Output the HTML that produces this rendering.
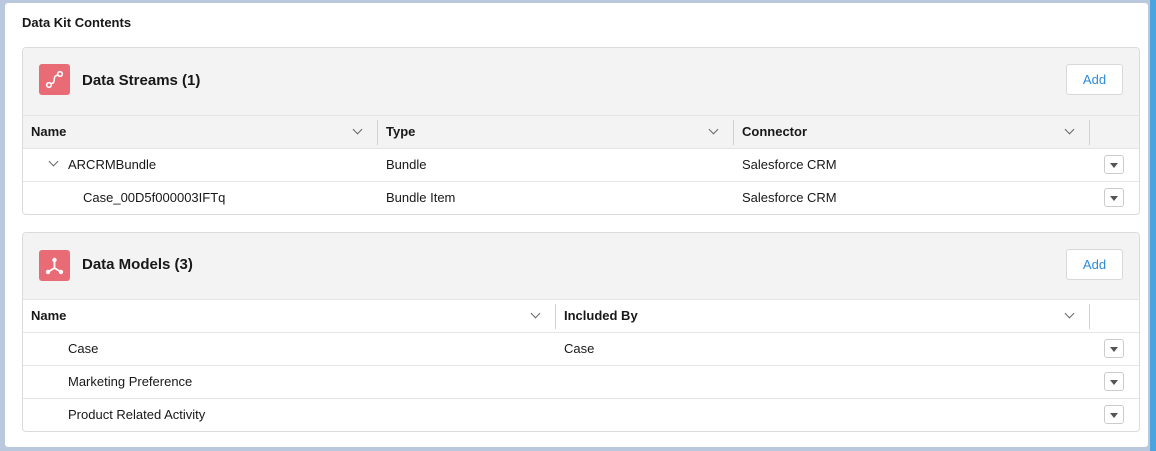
<!DOCTYPE html>
<html><head><style>
*{box-sizing:border-box;margin:0;padding:0}
body{width:1156px;height:451px;background:#b9c8dd;font-family:"Liberation Sans",sans-serif;position:relative;overflow:hidden;color:#181818}
.panel{position:absolute;left:5px;top:3px;width:1143px;height:444px;background:#fff;border-radius:3px}
.strip{position:absolute;left:1150px;top:0;width:6px;height:451px;background:#4ba3e0}
.title{position:absolute;left:22px;top:15px;font-size:13px;font-weight:bold}
.card{position:absolute;left:22px;width:1118px;border:1px solid #dddbda;border-radius:4px;background:#fff;overflow:hidden}
.hd{background:#f3f3f3;position:relative}
.icon{position:absolute;left:16px;width:31px;height:31px;background:#e96b76;border-radius:3px}
.ht{position:absolute;left:59px;font-size:15px;font-weight:bold}
.add{position:absolute;right:16px;width:57px;height:31px;background:#fff;border:1px solid #d8d8d8;border-radius:3px;color:#2e8ad6;font-size:13px;text-align:center;line-height:29px}
.row{position:relative;height:33px;border-top:1px solid #e5e5e5;font-size:13px}
.row span{position:absolute;top:8px}
.th{font-weight:bold}
.sep{position:absolute;top:4px;width:1px;height:25px;background:#d0d0d0}
.chev{position:absolute;top:10px;border-right:1.3px solid #666;border-bottom:1.3px solid #666;transform:rotate(45deg);width:7px;height:7px}
.dd{position:absolute;right:15px;top:6px;width:20px;height:19px;border:1px solid #ccc;border-radius:3px;background:#fff}
.dd:after{content:"";position:absolute;left:5px;top:7px;border-left:4px solid transparent;border-right:4px solid transparent;border-top:5px solid #555}
</style></head><body>
<div class="panel"></div><div class="strip"></div>
<div class="title">Data Kit Contents</div>

<div class="card" style="top:47px;height:168px">
 <div class="hd" style="height:67px">
  <div class="icon" style="top:16px"><svg width="31" height="31" viewBox="0 0 31 31"><circle cx="10" cy="21" r="2.3" fill="none" stroke="#fff" stroke-width="1.6"/><circle cx="21" cy="10" r="2.3" fill="none" stroke="#fff" stroke-width="1.6"/><path d="M12 19.5 L14 19 C16 18 14.5 13 16.5 12 L18.8 11" fill="none" stroke="#fff" stroke-width="1.6"/></svg></div>
  <div class="ht" style="top:24px">Data Streams (1)</div>
  <div class="add" style="top:16px">Add</div>
 </div>
 <div class="row th" style="background:#f3f3f3">
  <span style="left:8px">Name</span><i class="chev" style="left:331px"></i><div class="sep" style="left:354px"></div>
  <span style="left:363px">Type</span><i class="chev" style="left:687px"></i><div class="sep" style="left:710px"></div>
  <span style="left:719px">Connector</span><i class="chev" style="left:1043px"></i><div class="sep" style="left:1066px"></div>
 </div>
 <div class="row"><i class="chev" style="left:27px;top:9px"></i><span style="left:45px">ARCRMBundle</span><span style="left:363px">Bundle</span><span style="left:719px">Salesforce CRM</span><div class="dd"></div></div>
 <div class="row"><span style="left:60px">Case_00D5f000003IFTq</span><span style="left:363px">Bundle Item</span><span style="left:719px">Salesforce CRM</span><div class="dd"></div></div>
</div>

<div class="card" style="top:232px;height:200px">
 <div class="hd" style="height:66px">
  <div class="icon" style="top:17px"><svg width="31" height="31" viewBox="0 0 31 31"><circle cx="15.5" cy="10" r="2.2" fill="#fff"/><circle cx="9" cy="22" r="2.2" fill="#fff"/><circle cx="22" cy="22" r="2.2" fill="#fff"/><path d="M15.5 10 L15.5 18 L9 22 M15.5 18 L22 22" fill="none" stroke="#fff" stroke-width="1.8"/></svg></div>
  <div class="ht" style="top:23px">Data Models (3)</div>
  <div class="add" style="top:16px">Add</div>
 </div>
 <div class="row th">
  <span style="left:8px">Name</span><i class="chev" style="left:509px"></i><div class="sep" style="left:532px"></div>
  <span style="left:541px">Included By</span><i class="chev" style="left:1043px"></i><div class="sep" style="left:1066px"></div>
 </div>
 <div class="row"><span style="left:45px">Case</span><span style="left:541px">Case</span><div class="dd"></div></div>
 <div class="row"><span style="left:45px">Marketing Preference</span><div class="dd"></div></div>
 <div class="row"><span style="left:45px">Product Related Activity</span><div class="dd"></div></div>
</div>
</body></html>
